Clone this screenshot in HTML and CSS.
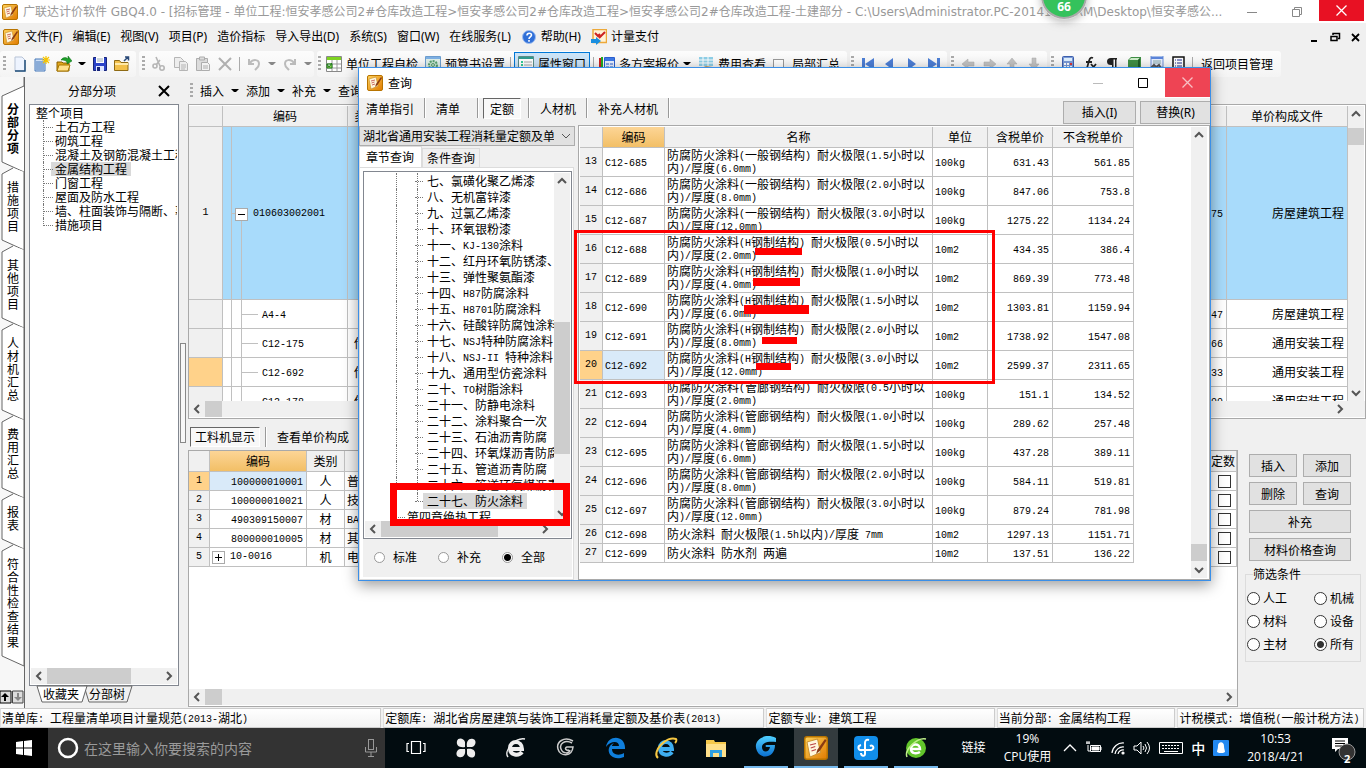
FILE: index.html
```html
<!DOCTYPE html>
<html lang="zh-CN">
<head>
<meta charset="utf-8">
<title>广联达计价软件 GBQ4.0</title>
<link rel="stylesheet" href="styles.css">
</head>
<body>
<svg class="defs" aria-hidden="true">
  <defs>
    <linearGradient id="gold" x1="0" y1="0" x2="1" y2="1"><stop offset="0" stop-color="#ffd35c"/><stop offset="1" stop-color="#e07a00"/></linearGradient>
    <linearGradient id="sky" x1="0" y1="0" x2="0" y2="1"><stop offset="0" stop-color="#4fd0ff"/><stop offset="1" stop-color="#0a6fd0"/></linearGradient>
  </defs>
  <symbol id="app" viewBox="0 0 16 16"><rect x=".5" y=".5" width="15" height="15" rx="1.5" fill="url(#gold)" stroke="#b87400"/><path d="M2 4l7-2 2 9-7 3z" fill="#fff7dc" stroke="#c58a2a" stroke-width=".6"/><path d="M4 6l4-1M4.500 8l3-1M5 10l3-1" stroke="#b44" stroke-width=".8"/><path d="M14 2L9 9l-1 3 2.500-2L15 3z" fill="#8a3b12"/></symbol>
  <symbol id="left" viewBox="0 0 16 16"><path d="M10 4L6 8l4 4" fill="none" stroke="#555" stroke-width="2"/></symbol>
  <symbol id="right" viewBox="0 0 16 16"><path d="M6 4l4 4-4 4" fill="none" stroke="#555" stroke-width="2"/></symbol>
  <symbol id="up" viewBox="0 0 16 16"><path d="M4 10l4-4 4 4" fill="none" stroke="#555" stroke-width="2"/></symbol>
  <symbol id="down" viewBox="0 0 16 16"><path d="M4 6l4 4 4-4" fill="none" stroke="#555" stroke-width="2"/></symbol>
  <symbol id="new" viewBox="0 0 16 16"><path d="M3 1h7l3 3v11H3z" fill="#eef4ff" stroke="#b7c3d6"/><path d="M13 4v11H3" fill="none" stroke="#1f4e79" stroke-width="1.500"/></symbol>
  <symbol id="newproj" viewBox="0 0 16 16"><path d="M1 3h8l2 2v10H1z" fill="#cfe0f7" stroke="#4778b8"/><path d="M3 5v9M5 5v9M7 5v9M9 5v9" stroke="#4778b8"/><path d="M12 0v8M8 4h8M9 1l6 6M15 1L9 7" stroke="#f5c400" stroke-width="1.200"/></symbol>
  <symbol id="open" viewBox="0 0 16 16"><path d="M1 6h5l1 1h6v8H1z" fill="#e2a71d" stroke="#8a6100"/><path d="M3 9h11l-2 6H1z" fill="#ffe08a" stroke="#a97900"/><path d="M5 4c2-3 5-3 7-1V0l4 5-5 3V6C9 4 7 4 5 4z" fill="#1fa02b" stroke="#0a6a14" stroke-width=".5"/></symbol>
  <symbol id="save" viewBox="0 0 16 16"><path d="M1.500 1.500h13v13h-13z" fill="#2b43c8" stroke="#17257a"/><path d="M4 1h8v6H4z" fill="#fff"/><path d="M5 3h6M5 5h6" stroke="#9ab"/><path d="M4 10h8v5H4z" fill="#dfe6ff"/><path d="M5 11h3v4H5z" fill="#17257a"/></symbol>
  <symbol id="folder" viewBox="0 0 16 16"><path d="M.5 4.500h5l1.500 2h7v8H.5z" fill="#f2c04a" stroke="#8e6a14"/><path d="M1 8h13" stroke="#ffe9a8" stroke-width="2"/><path d="M10 5l4-4M11 1h3.500v3.500" stroke="#2a4a78" fill="none" stroke-width="1.500"/></symbol>
  <symbol id="cut" viewBox="0 0 16 16"><g fill="none" stroke="#b5b5b5" stroke-width="1.600"><path d="M5 1l4 9M9 4L5 9"/><circle cx="4" cy="10" r="2"/><circle cx="11" cy="12" r="2.200"/></g></symbol>
  <symbol id="copy" viewBox="0 0 16 16"><g fill="#ededed" stroke="#b5b5b5"><path d="M1.500 1.500h6l3 3v7h-9z"/><path d="M6.500 5.500h6l2 2v7h-8z"/><path d="M8 9h5M8 11h5M8 13h4"/></g></symbol>
  <symbol id="paste" viewBox="0 0 16 16"><g fill="#dcdcdc" stroke="#adadad"><path d="M1.500 2.500h11v12h-11z"/><path d="M4.500 1h5v3h-5z"/><path d="M6.500 6.500h6l2 2v6h-8z" fill="#f3f3f3"/><path d="M8 10h5M8 12h5"/></g></symbol>
  <symbol id="del" viewBox="0 0 16 16"><path d="M2 2l12 12M14 2L2 14" stroke="#b0b0b0" stroke-width="2"/></symbol>
  <symbol id="undo" viewBox="0 0 16 16"><path d="M3 3v5h5M4 7c3-4 9-4 9 1 0 3-2 4-4 6" fill="none" stroke="#bbb" stroke-width="2"/></symbol>
  <symbol id="redo" viewBox="0 0 16 16"><path d="M13 3v5H8M12 7C9 3 3 3 3 8c0 3 2 4 4 6" fill="none" stroke="#bbb" stroke-width="2"/></symbol>
  <symbol id="check" viewBox="0 0 16 16"><path d="M.5.5h15v15H.5z" fill="#fff" stroke="#888"/><path d="M1 1h14v3H1z" fill="#7ed321"/><path d="M1 8h14M1 12h14M6 4v11M11 4v11" stroke="#999"/><path d="M1 8h5v4H1zM1 8l2 3 3-4" fill="#8fd14f" stroke="#1d7a1d"/></symbol>
  <symbol id="gear" viewBox="0 0 16 16"><path d="M.5.5h15v15H.5z" fill="#dff0ea" stroke="#6d9fd0"/><path d="M1 1h14v2H1z" fill="#7fb2e6"/><circle cx="8" cy="9" r="4" fill="#c9e6d2" stroke="#58a070" stroke-width="2" stroke-dasharray="2 1"/><circle cx="8" cy="9" r="1.500" fill="none" stroke="#58a070"/></symbol>
  <symbol id="props" viewBox="0 0 16 16"><path d="M.5.5h15v15H.5z" fill="#fff" stroke="#5b8f8a"/><path d="M1 1h14v2H1z" fill="#2f9c90"/><path d="M3 6h2M3 9h2M3 12h2" stroke="#3c9" stroke-width="2"/><path d="M6 6h8M6 9h8M6 12h8" stroke="#aaa"/></symbol>
  <symbol id="multi" viewBox="0 0 16 16"><path d="M1 2v13" stroke="#c22" stroke-width="2"/><path d="M3 1v14" stroke="#2a2" stroke-width="2"/><path d="M5.500 1.500h10v13h-10z" fill="#e8f0ff" stroke="#2a5fd0"/><path d="M6 2h9v3H6z" fill="#3d7ae8"/><path d="M7 8h3M11 8h3M7 11h3M11 11h3" stroke="#2a5fd0"/></symbol>
  <symbol id="fee" viewBox="0 0 16 16"><path d="M1 1h14v9H1z" fill="#8fd0e8"/><path d="M1 4h14M1 7h14M5 1v9M10 1v9" stroke="#fff"/><path d="M3 12l5-2 7 1v4H3z" fill="#c99c55"/></symbol>
  <symbol id="first" viewBox="0 0 16 16"><path d="M2 2h3v12H2zM14 2v12L5 8z" fill="#4d7fd6"/></symbol>
  <symbol id="prev" viewBox="0 0 16 16"><path d="M11 2v12L3 8z" fill="#4d7fd6"/></symbol>
  <symbol id="next" viewBox="0 0 16 16"><path d="M4 2v12l8-6z" fill="#4d7fd6"/></symbol>
  <symbol id="last" viewBox="0 0 16 16"><path d="M11 2h3v12h-3zM2 2v12l9-6z" fill="#4d7fd6"/></symbol>
  <symbol id="garrow" viewBox="0 0 16 16"><path d="M2 8l6-5v3h6v4H8v3z" fill="#c3c3c3" stroke="#aaa" stroke-width=".5"/></symbol>
  <symbol id="calc" viewBox="0 0 16 16"><rect x="2.500" y=".5" width="11" height="15" rx="1" fill="#7b9bd8" stroke="#3d5fae"/><path d="M4 2h8v3H4z" fill="#dff0ff"/><path d="M4 7h2v2H4zM7 7h2v2H7zM4 10h2v2H4zM7 10h2v2H7zM10 10h2v2h-2zM4 13h2v1H4zM7 13h2v1H7zM10 13h2v1h-2z" fill="#fff"/><path d="M10 7h2v2h-2z" fill="#d33"/></symbol>
  <symbol id="fx" viewBox="0 0 16 16"><path d="M11 2C7 0 7 6 5 12c-1 2-2 2-3 1M4 6h6M9 8l5 6M14 8l-5 6" fill="none" stroke="#222" stroke-width="1.800"/></symbol>
  <symbol id="para" viewBox="0 0 16 16"><path d="M13 2H7a4 3.500 0 0 0 0 7h1v6h1.500V3.500H11V15h1.500V3.500H13z" fill="#222"/></symbol>
  <symbol id="book" viewBox="0 0 16 16"><path d="M2 4l3-3h10v11l-3 3H2z" fill="#3f8f45"/><path d="M5 2h9l-2 2H3z" fill="#cfeecb"/><path d="M12 4l2-2v9l-2 2z" fill="#1f5f27"/></symbol>
  <symbol id="find" viewBox="0 0 16 16"><path d="M3 0h12v11H3z" fill="#e7efff" stroke="#6b8fd6"/><path d="M3 1h12v2H3z" fill="#5c86dc"/><path d="M5 5h8M5 7h8" stroke="#8aa"/><path d="M1 14l5-5 2 2 3-2 3 5" fill="none" stroke="#555" stroke-width="2"/></symbol>
  <symbol id="list" viewBox="0 0 16 16"><path d="M3 1h11v14H3z" fill="#fff" stroke="#111" stroke-width="1.500"/><path d="M5 4h1M5 7h1M5 10h1M7 4h5M7 7h5M7 10h5M5 13h7" stroke="#1c2a8c"/></symbol>
</svg>

<div class="desktop">
  <header class="titlebar">
    <svg class="ic"><use href="#app"/></svg>
    <h1>广联达计价软件 GBQ4.0 - [招标管理 - 单位工程:恒安孝感公司2#仓库改造工程&gt;恒安孝感公司2#仓库改造工程&gt;恒安孝感公司2#仓库改造工程-土建部分 - C:\Users\Administrator.PC-20141120RM\Desktop\恒安孝感公...</h1>
    <div class="winbtns">
      <button aria-label="最小化"><svg width="10" height="10"><path d="M0 5.500h10" stroke="#888"/></svg></button>
      <button aria-label="还原"><svg width="10" height="10"><path d="M.5 2.500h7v7h-7zM2.500 2V.5h7v7H8" fill="none" stroke="#888"/></svg></button>
      <button class="close" aria-label="关闭"><svg width="11" height="11"><path d="M.5.5l10 10M10.500.5l-10 10" stroke="#fff" stroke-width="1.300"/></svg></button>
    </div>
    <div class="ball">66</div>
  </header>

  <nav class="menubar">
    <svg class="ic"><use href="#app"/></svg>
    <button>文件(F)</button><button>编辑(E)</button><button>视图(V)</button><button>项目(P)</button><button>造价指标</button><button>导入导出(D)</button><button>系统(S)</button><button>窗口(W)</button><button>在线服务(L)</button>
    <button><svg class="ic" viewBox="0 0 16 16"><circle cx="8" cy="8" r="6.500" fill="#2f6fd8" stroke="#9dbdf0"/><path d="M6 6.500c0-3 4.500-3 4.500-.5C10.500 8 8 7.800 8 10M8 11v1.800" fill="none" stroke="#fff" stroke-width="1.600"/></svg>帮助(H)</button>
    <button><svg class="ic" viewBox="0 0 16 16"><path d="M2 .5h13.500v13H2z" fill="#fff3d8" stroke="#eda93a" stroke-width="1.500"/><path d="M14 3L8 9M4 4l3 3 2-2" stroke="#c22" stroke-width="2" fill="none"/><path d="M0 10h5V8l5 4-5 4v-2H0z" fill="#1a8fe0"/></svg>计量支付</button>
    <div class="mdi">
      <button aria-label="最小化窗口"><svg width="11" height="11"><path d="M1 9h6" stroke="#000" stroke-width="2"/></svg></button>
      <button aria-label="还原窗口"><svg width="11" height="11"><path d="M1 4.500h6v4H1zM3 3V1.500h6.500v5H8" fill="none" stroke="#000" stroke-width="1.500"/></svg></button>
      <button aria-label="关闭窗口"><svg width="11" height="11"><path d="M2 2l7 7M9 2L2 9" stroke="#000" stroke-width="1.800"/></svg></button>
    </div>
  </nav>

  <div class="toolbars">
    <div class="bar"><i class="grip"></i><svg class="ic"><use href="#new"/></svg><svg class="ic"><use href="#newproj"/></svg><svg class="ic"><use href="#open"/></svg><i class="caret"></i><svg class="ic"><use href="#save"/></svg><svg class="ic"><use href="#folder"/></svg></div>
    <div class="bar edit"><i class="grip"></i><svg class="ic"><use href="#cut"/></svg><svg class="ic"><use href="#copy"/></svg><svg class="ic"><use href="#paste"/></svg><svg class="ic"><use href="#del"/></svg><i class="sep"></i><svg class="ic"><use href="#undo"/></svg><i class="caret dim"></i><svg class="ic"><use href="#redo"/></svg><i class="caret dim"></i></div>
    <div class="bar named"><i class="grip"></i><button><svg class="ic"><use href="#check"/></svg>单位工程自检</button><button><svg class="ic"><use href="#gear"/></svg>预算书设置</button><i class="sep"></i><button class="on"><svg class="ic"><use href="#props"/></svg>属性窗口</button><i class="sep"></i><button><svg class="ic"><use href="#multi"/></svg>多方案报价<i class="caret"></i></button><button><svg class="ic"><use href="#fee"/></svg>费用查看</button><label><input type="checkbox" class="box small">局部汇总</label></div>
    <div class="bar slim"><i class="grip"></i><svg class="ic"><use href="#first"/></svg><svg class="ic"><use href="#prev"/></svg><svg class="ic"><use href="#next"/></svg><svg class="ic"><use href="#last"/></svg></div>
    <div class="bar slim"><i class="grip"></i><svg class="ic"><use href="#garrow"/></svg><svg class="ic r180"><use href="#garrow"/></svg><svg class="ic r90"><use href="#garrow"/></svg><svg class="ic r270"><use href="#garrow"/></svg></div>
    <div class="bar wide"><i class="grip"></i><svg class="ic"><use href="#calc"/></svg><svg class="ic"><use href="#fx"/></svg><svg class="ic"><use href="#para"/></svg><svg class="ic"><use href="#book"/></svg><svg class="ic"><use href="#find"/></svg><svg class="ic"><use href="#list"/></svg><i class="sep"></i><button>返回项目管理</button></div>
  </div>

  <main class="work">
    <nav class="vtabs">
      <svg class="vshape" width="24" height="628" fill="#fff" stroke="#666">
        <path stroke="none" fill="#f0f0f0" d="M24 9L2 19v66l22 10z"/>
        <path d="M24 0v9L2 19v66l22 10"/>
        <path d="M24 95V173L2 163V97l11-6"/>
        <path d="M24 173v78L2 241v-66l11-6"/>
        <path d="M24 251v92L2 333v-80l11-6"/>
        <path d="M24 343v78L2 411v-66l11-6"/>
        <path d="M24 421v51L2 462v-39l11-6"/>
        <path d="M24 472v117L2 579V474l11-6"/>
      </svg>
      <button class="cur">分部分项</button><button>措施项目</button><button>其他项目</button><button>人材机汇总</button><button>费用汇总</button><button>报表</button><button>符合性检查结果</button>
      <svg class="vend" width="24" height="14"><path d="M0 1h11v12H0z" fill="#ddd" stroke="#000"/><path d="M12.500 1H23v12H12.500z" fill="#ddd" stroke="#444"/><path d="M5 3l4 4H6v4H4V7H1z" fill="#000"/><path d="M18 11l4-4h-3V3h-2v4h-3z" fill="#888"/></svg>
    </nav>

    <aside class="side">
      <div class="side-head"><h2>分部分项</h2><button aria-label="关闭面板"><svg width="12" height="12"><path d="M1 1l10 10M11 1L1 11" stroke="#000" stroke-width="2"/></svg></button></div>
      <div class="side-box">
        <ul class="tree">
          <li class="root">整个项目</li><li>土石方工程</li><li>砌筑工程</li><li>混凝土及钢筋混凝土工程</li><li><span class="sel">金属结构工程</span></li><li>门窗工程</li><li>屋面及防水工程</li><li>墙、柱面装饰与隔断、幕墙</li><li>措施项目</li>
        </ul>
        <div class="hs"><svg class="ic"><use href="#left"/></svg><i class="thumb long"></i><svg class="ic end"><use href="#right"/></svg></div>
      </div>
      <div class="side-tabs">
        <svg width="150" height="20" stroke="#666"><path d="M55 1l5 16h38l5-16z" fill="#f0f0f0"/><path d="M8 1l5 16h40l5-16z" fill="#fff"/></svg>
        <button>收藏夹</button><button>分部树</button>
      </div>
    </aside>

    <div class="split"><i></i></div>

    <section class="right">
      <div class="subbar"><i class="grip"></i><button>插入<i class="caret"></i></button><button>添加<i class="caret"></i></button><button>补充<i class="caret"></i></button><button>查询<i class="caret"></i></button></div>
      <div class="grid top">
        <div class="clip">
          <table class="bill">
            <colgroup><col class="c34"><col class="c125"><col class="c38"><col><col class="c60"><col class="c121"></colgroup>
            <tr><th></th><th>编码</th><th>类别</th><th></th><th></th><th>单价构成文件</th></tr>
            <tr class="big"><td class="no">1</td><td class="par"><button aria-label="折叠"><svg width="11" height="11"><path d="M2 5.500h7" stroke="#000"/></svg></button><span class="h">010603002001</span></td><td></td><td></td><td class="num"><span class="h">75</span></td><td class="num">房屋建筑工程</td></tr>
            <tr><td class="no"></td><td class="kid"><span class="h">A4-4</span></td><td></td><td></td><td class="num"><span class="h">47</span></td><td class="num">房屋建筑工程</td></tr>
            <tr><td class="no"></td><td class="kid"><span class="h">C12-175</span></td><td class="cat">借</td><td></td><td class="num"><span class="h">66</span></td><td class="num">通用安装工程</td></tr>
            <tr><td class="no hot"></td><td class="kid"><span class="h">C12-692</span></td><td class="cat">借</td><td></td><td class="num"><span class="h">33</span></td><td class="num">通用安装工程</td></tr>
            <tr><td class="no"></td><td class="kid"><span class="h">C12-178</span></td><td class="cat">借</td><td></td><td class="num"><span class="h">99</span></td><td class="num">通用安装工程</td></tr>
          </table>
        </div>
        <div class="vs"><svg class="ic"><use href="#up"/></svg><i class="thumb"></i><svg class="ic end"><use href="#down"/></svg></div>
        <div class="hs"><svg class="ic"><use href="#left"/></svg><i class="thumb"></i><svg class="ic end"><use href="#right"/></svg></div>
      </div>
      <div class="midbar"><button class="sunk">工料机显示</button><i class="groove"></i><button>查看单价构成</button></div>
      <div class="lower">
        <div class="grid low">
          <div class="clip">
            <table class="res">
              <colgroup><col class="c21"><col class="c97"><col class="c38"><col><col class="c60"></colgroup>
              <tr><th></th><th class="gold">编码</th><th>类别</th><th></th><th class="lock">锁定数</th></tr>
              <tr><td class="no hot">1</td><td class="num pick"><span class="h">100000010001</span></td><td class="mid">人</td><td>普工</td><td class="num"><input type="checkbox" class="box" aria-label="锁定1"></td></tr>
              <tr><td class="no">2</td><td class="num"><span class="h">100000010021</span></td><td class="mid">人</td><td>技工</td><td class="num"><input type="checkbox" class="box" aria-label="锁定2"></td></tr>
              <tr><td class="no">3</td><td class="num"><span class="h">490309150007</span></td><td class="mid">材</td><td><span class="h">BA</span></td><td class="num"><input type="checkbox" class="box" aria-label="锁定3"></td></tr>
              <tr><td class="no">4</td><td class="num"><span class="h">800000010005</span></td><td class="mid">材</td><td>其他</td><td class="num"><input type="checkbox" class="box" aria-label="锁定4"></td></tr>
              <tr><td class="no">5</td><td class="plus"><div><button aria-label="展开"><svg width="11" height="11"><path d="M2 5.500h7M5.500 2v7" stroke="#000"/></svg></button><span class="h">10-0016</span></div></td><td class="mid">机</td><td>电</td><td class="num"><input type="checkbox" class="box" aria-label="锁定5"></td></tr>
            </table>
          </div>
          <div class="hs"><svg class="ic"><use href="#left"/></svg><i class="thumb"></i><svg class="ic end"><use href="#right"/></svg></div>
        </div>
        <aside class="actions">
          <div class="btns"><button>插入</button><button>添加</button><button>删除</button><button>查询</button><button class="full">补充</button><button class="full">材料价格查询</button></div>
          <fieldset><legend>筛选条件</legend>
            <label><input type="radio" name="f">人工</label><label><input type="radio" name="f">机械</label>
            <label><input type="radio" name="f">材料</label><label><input type="radio" name="f">设备</label>
            <label><input type="radio" name="f">主材</label><label><input type="radio" name="f" checked>所有</label>
          </fieldset>
        </aside>
      </div>
    </section>
  </main>

  <footer class="status">
    <div>清单库<span class="h">: </span>工程量清单项目计量规范<span class="h">(2013-</span>湖北<span class="h">)</span></div>
    <div>定额库<span class="h">: </span>湖北省房屋建筑与装饰工程消耗量定额及基价表<span class="h">(2013)</span></div>
    <div>定额专业<span class="h">: </span>建筑工程</div>
    <div>当前分部<span class="h">: </span>金属结构工程</div>
    <div>计税模式<span class="h">: </span>增值税<span class="h">(</span>一般计税方法<span class="h">)</span></div>
  </footer>

  <footer class="taskbar">
    <button class="start" aria-label="开始"><svg width="16" height="16" fill="#fff"><path d="M0 2l7-1v6.500H0zM8 1l8-1v7.500H8zM0 8.500h7V15l-7-1zM8 8.500h8V16l-8-1z"/></svg></button>
    <label class="search"><svg width="22" height="22"><circle cx="11" cy="11" r="9" fill="none" stroke="#fff" stroke-width="2.500"/></svg><input type="text" placeholder="在这里输入你要搜索的内容" aria-label="搜索"><svg width="12" height="18" fill="none" stroke="#999"><rect x="3.500" y=".5" width="5" height="10"/><path d="M.5 8v5h11V8M6 13v4M3 17.500h6"/></svg></label>
    <div class="apps">
      <button aria-label="任务视图"><svg width="20" height="20" fill="none" stroke="#fff" stroke-width="1.200"><path d="M5.500 3.500h9v12h-9zM3 5.500H1v8h2M17 5.500h2v8h-2"/></svg></button>
      <button aria-label="风车"><svg width="22" height="22" viewBox="0 0 22 22" fill="#eee"><path d="M10 10C4 11 1 8 2 4s7-3 8 1zM12 10c-1-6 2-9 6-8s3 7-1 8zM12 12c6-1 9 2 8 6s-7 3-8-1zM10 12c1 6-2 9-6 8s-3-7 1-8z"/></svg></button>
      <button aria-label="浏览器"><svg width="24" height="24" viewBox="0 0 24 24" fill="none" stroke="#eee"><path d="M6 13h12c0-9-12-9-12-1 0 8 9 8 12 4" stroke-width="4"/><path d="M4 21C-1 15 12 1 21 3" stroke-width="1.500"/></svg></button>
      <button aria-label="旋风"><svg width="22" height="22" fill="none" stroke="#ccc" stroke-width="1.500"><path d="M18 4C9-1 1 5 3 12c2 8 14 8 15-2h-6c-3 1-1 4 2 3M17 6C10 2 4 7 6 12c2 5 8 5 9 1"/></svg></button>
      <button aria-label="Edge"><svg width="22" height="22" viewBox="0 0 22 22"><path d="M1 10C3-3 21-2 20 12H7c0 6 7 7 12 4v4C9 24 2 18 4 11c1-3 3-4 5-5-1 1-2 2-2 3h7C14 3 5 4 1 10z" fill="#0f7fdc"/></svg></button>
      <button aria-label="IE"><svg width="24" height="24" viewBox="0 0 24 24" fill="none"><path d="M6 13h12c0-9-12-9-12-1 0 8 9 8 12 4" stroke="#3eaef0" stroke-width="4"/><path d="M4 22C-3 16 13-1 22 3c1 1 0 3-1 4" stroke="#f7c843" stroke-width="2"/></svg></button>
      <button aria-label="资源管理器"><svg width="22" height="20"><path d="M1 2h8l1 2h11v15H1z" fill="#f5c84b"/><path d="M1 6h20v13H1z" fill="#ffe08a"/><path d="M5 19v-7h12v7h-3v-4H8v4z" fill="#2f9fe0"/></svg></button>
      <button class="run" aria-label="广联达"><svg width="24" height="26" viewBox="0 0 24 26"><path d="M22 3C10-3-2 6 3 16c4 9 18 7 18-6h-8c-2 0-2 2 0 2h3c-1 6-8 6-8 0 0-4 5-6 14-5z" fill="url(#sky)"/></svg></button>
      <button class="run now" aria-label="GBQ"><svg width="24" height="24"><use href="#app"/></svg></button>
      <button class="run" aria-label="云"><svg width="24" height="24" fill="none" stroke="#fff" stroke-width="2"><rect width="24" height="24" rx="4" fill="#118eea" stroke="none"/><path d="M15 4c-3-1-4 1-4 3v11c0 3-4 2-4-1M8 14c-4 1-5-4-1-5M6 14h10c5 0 4-6 0-4"/></svg></button>
      <button class="run" aria-label="安全浏览器"><svg width="24" height="24" viewBox="0 0 24 24" fill="none"><circle cx="12" cy="12" r="10" fill="#62c52b"/><path d="M7 13h9c0-6-9-6-9 0 0 5 6 5 9 3" stroke="#fff" stroke-width="2.500"/><path d="M3 21C0 14 13 1 22 3" stroke="#bff08a" stroke-width="1.500"/></svg></button>
    </div>
    <div class="tray">
      <span>链接</span><span class="two cpu">19%<br>CPU使用</span>
      <div class="trayicons">
      <svg width="14" height="14" fill="none" stroke="#fff" stroke-width="1.300"><path d="M1 10l6-6 6 6"/></svg>
      <svg width="18" height="14" fill="none" stroke="#fff"><path d="M5.500 4.500h10v6h-10zM1 2h4M2 0v3M4 0v3M3 4v6h2M16 6v3"/><path d="M7 6h7v3H7z" fill="#fff"/></svg>
      <svg width="14" height="14" fill="none" stroke="#fff" stroke-width="1.200"><path d="M1 12A11 11 0 0 1 13 2M4 13a8 8 0 0 1 9-7M7 13a5 5 0 0 1 6-4"/><circle cx="12" cy="12" r="1" fill="#fff"/></svg>
      <svg width="18" height="14" fill="none" stroke="#fff"><path d="M1 5h3l4-4v12L4 9H1zM10 5q2 2 0 4M12 3q3 4 0 8M14 1q5 6 0 12"/></svg>
      <svg width="24" height="14" fill="none" stroke="#fff"><path d="M.5 1.500h23v11H.5z"/><path d="M3 4.500h18M3 7.500h18" stroke-dasharray="2 1"/><path d="M5 10.500h14"/></svg>
      <b>中</b>
      <svg width="16" height="16"><rect width="16" height="16" rx="1" fill="#2288f0"/><path d="M4 12c0-2 1-3 1-6 0-5 6-5 6 0 0 3 1 4 1 6l-2 1H6z" fill="#fff"/></svg>
      </div>
      <span class="two">10:53<br>2018/4/21</span>
      <button class="note" aria-label="通知"><svg width="26" height="26"><path d="M1 3h16v11H7l-3 3v-3H1z" fill="#fff"/><path d="M4 6h10M4 8.500h10M4 11h7" stroke="#000"/><circle cx="16" cy="17" r="8" fill="#333" stroke="#999"/></svg><em>2</em></button>
    </div>
  </footer>

  <div class="dialog" role="dialog" aria-label="查询">
    <div class="dtitle"><svg class="ic"><use href="#app"/></svg><h2>查询</h2>
      <div class="dbtns"><button aria-label="最小化"><svg width="10" height="10"><path d="M0 5.500h10" stroke="#bbb"/></svg></button><button aria-label="最大化"><svg width="10" height="10"><path d="M.5.500h9v9h-9z" fill="none" stroke="#000"/></svg></button><button class="close" aria-label="关闭对话框"><svg width="11" height="11"><path d="M.5.5l10 10M10.500.5l-10 10" stroke="#f7c0c5" stroke-width="1.300"/></svg></button></div>
    </div>
    <div class="dbar">
      <div class="dtabs"><button>清单指引</button><i class="groove"></i><button class="roomy">清单</button><i class="groove"></i><button class="sunk">定额</button><i class="groove"></i><button>人材机</button><i class="groove"></i><button>补充人材机</button><i class="groove"></i></div>
      <div class="dact"><button>插入(I)</button><button>替换(R)</button></div>
    </div>
    <div class="dmain">
      <div class="dleft">
        <div class="combo"><select aria-label="定额库"><option>湖北省通用安装工程消耗量定额及单</option></select><svg class="ic"><path d="M4 6l4 4 4-4" fill="none" stroke="#555"/></svg></div>
        <div class="qtabs"><button class="cur">章节查询</button><button>条件查询</button></div>
        <div class="qpane">
          <div class="qbox">
            <ul class="qtree">
              <li>七、氯磺化聚乙烯漆</li><li>八、无机富锌漆</li><li>九、过氯乙烯漆</li><li>十、环氧银粉漆</li><li>十一、<span class="h">KJ-130</span>涂料</li><li>十二、红丹环氧防锈漆、</li><li>十三、弹性聚氨酯漆</li><li>十四、<span class="h">H87</span>防腐涂料</li><li>十五、<span class="h">H8701</span>防腐涂料</li><li>十六、硅酸锌防腐蚀涂料</li><li>十七、<span class="h">NSJ</span>特种防腐涂料</li><li>十八、<span class="h">NSJ-II </span>特种涂料</li><li>十九、通用型仿瓷涂料</li><li>二十、<span class="h">TO</span>树脂涂料</li><li>二十一、防静电涂料</li><li>二十二、涂料聚合一次</li><li>二十三、石油沥青防腐</li><li>二十四、环氧煤沥青防腐</li><li>二十五、管道沥青防腐</li><li>二十六、管道环氧煤沥青</li><li class="fin"><span class="sel">二十七、防火涂料</span></li><li class="up">第四章绝热工程</li>
            </ul>
            <div class="vs"><svg class="ic"><use href="#up"/></svg><i class="thumb"></i><svg class="ic end"><use href="#down"/></svg></div>
            <div class="hs"><svg class="ic"><use href="#left"/></svg><i class="thumb"></i><svg class="ic end"><use href="#right"/></svg></div>
          </div>
          <div class="scope"><label><input type="radio" name="s">标准</label><label><input type="radio" name="s">补充</label><label><input type="radio" name="s" checked>全部</label></div>
        </div>
      </div>
      <div class="dgrid">
        <table class="quota">
          <colgroup><col class="c23"><col class="c62"><col class="c268"><col class="c55"><col class="c65"><col class="c81"></colgroup>
          <tr><th></th><th class="gold">编码</th><th>名称</th><th>单位</th><th>含税单价</th><th>不含税单价</th></tr>
          <tr><td class="no">13</td><td><span class="h">C12-685</span></td><td class="nm">防腐防火涂料<span class="h">(</span>一般钢结构<span class="h">) </span>耐火极限<span class="h">(1.5</span>小时以<br>内<span class="h">)/</span>厚度<span class="h">(6.0mm)</span></td><td><span class="h">100kg</span></td><td class="num"><span class="h">631.43</span></td><td class="num"><span class="h">561.85</span></td></tr>
          <tr><td class="no">14</td><td><span class="h">C12-686</span></td><td class="nm">防腐防火涂料<span class="h">(</span>一般钢结构<span class="h">) </span>耐火极限<span class="h">(2.0</span>小时以<br>内<span class="h">)/</span>厚度<span class="h">(8.0mm)</span></td><td><span class="h">100kg</span></td><td class="num"><span class="h">847.06</span></td><td class="num"><span class="h">753.8</span></td></tr>
          <tr><td class="no">15</td><td><span class="h">C12-687</span></td><td class="nm">防腐防火涂料<span class="h">(</span>一般钢结构<span class="h">) </span>耐火极限<span class="h">(3.0</span>小时以<br>内<span class="h">)/</span>厚度<span class="h">(12.0mm)</span></td><td><span class="h">100kg</span></td><td class="num"><span class="h">1275.22</span></td><td class="num"><span class="h">1134.24</span></td></tr>
          <tr><td class="no">16</td><td><span class="h">C12-688</span></td><td class="nm">防腐防火涂料<span class="h">(H</span>钢制结构<span class="h">) </span>耐火极限<span class="h">(0.5</span>小时以<br>内<span class="h">)/</span>厚度<span class="h">(2.0mm)</span></td><td><span class="h">10m2</span></td><td class="num"><span class="h">434.35</span></td><td class="num"><span class="h">386.4</span></td></tr>
          <tr><td class="no">17</td><td><span class="h">C12-689</span></td><td class="nm">防腐防火涂料<span class="h">(H</span>钢制结构<span class="h">) </span>耐火极限<span class="h">(1.0</span>小时以<br>内<span class="h">)/</span>厚度<span class="h">(4.0mm)</span></td><td><span class="h">10m2</span></td><td class="num"><span class="h">869.39</span></td><td class="num"><span class="h">773.48</span></td></tr>
          <tr><td class="no">18</td><td><span class="h">C12-690</span></td><td class="nm">防腐防火涂料<span class="h">(H</span>钢制结构<span class="h">) </span>耐火极限<span class="h">(1.5</span>小时以<br>内<span class="h">)/</span>厚度<span class="h">(6.0mm)</span></td><td><span class="h">10m2</span></td><td class="num"><span class="h">1303.81</span></td><td class="num"><span class="h">1159.94</span></td></tr>
          <tr><td class="no">19</td><td><span class="h">C12-691</span></td><td class="nm">防腐防火涂料<span class="h">(H</span>钢制结构<span class="h">) </span>耐火极限<span class="h">(2.0</span>小时以<br>内<span class="h">)/</span>厚度<span class="h">(8.0mm)</span></td><td><span class="h">10m2</span></td><td class="num"><span class="h">1738.92</span></td><td class="num"><span class="h">1547.08</span></td></tr>
          <tr><td class="no hot">20</td><td class="pick"><span class="h">C12-692</span></td><td class="nm">防腐防火涂料<span class="h">(H</span>钢制结构<span class="h">) </span>耐火极限<span class="h">(3.0</span>小时以<br>内<span class="h">)/</span>厚度<span class="h">(12.0mm)</span></td><td><span class="h">10m2</span></td><td class="num"><span class="h">2599.37</span></td><td class="num"><span class="h">2311.65</span></td></tr>
          <tr><td class="no">21</td><td><span class="h">C12-693</span></td><td class="nm">防腐防火涂料<span class="h">(</span>管廊钢结构<span class="h">) </span>耐火极限<span class="h">(0.5</span>小时以<br>内<span class="h">)/</span>厚度<span class="h">(2.0mm)</span></td><td><span class="h">100kg</span></td><td class="num"><span class="h">151.1</span></td><td class="num"><span class="h">134.52</span></td></tr>
          <tr><td class="no">22</td><td><span class="h">C12-694</span></td><td class="nm">防腐防火涂料<span class="h">(</span>管廊钢结构<span class="h">) </span>耐火极限<span class="h">(1.0</span>小时以<br>内<span class="h">)/</span>厚度<span class="h">(4.0mm)</span></td><td><span class="h">100kg</span></td><td class="num"><span class="h">289.62</span></td><td class="num"><span class="h">257.48</span></td></tr>
          <tr><td class="no">23</td><td><span class="h">C12-695</span></td><td class="nm">防腐防火涂料<span class="h">(</span>管廊钢结构<span class="h">) </span>耐火极限<span class="h">(1.5</span>小时以<br>内<span class="h">)/</span>厚度<span class="h">(6.0mm)</span></td><td><span class="h">100kg</span></td><td class="num"><span class="h">437.28</span></td><td class="num"><span class="h">389.11</span></td></tr>
          <tr><td class="no">24</td><td><span class="h">C12-696</span></td><td class="nm">防腐防火涂料<span class="h">(</span>管廊钢结构<span class="h">) </span>耐火极限<span class="h">(2.0</span>小时以<br>内<span class="h">)/</span>厚度<span class="h">(8.0mm)</span></td><td><span class="h">100kg</span></td><td class="num"><span class="h">584.11</span></td><td class="num"><span class="h">519.81</span></td></tr>
          <tr><td class="no">25</td><td><span class="h">C12-697</span></td><td class="nm">防腐防火涂料<span class="h">(</span>管廊钢结构<span class="h">) </span>耐火极限<span class="h">(3.0</span>小时以<br>内<span class="h">)/</span>厚度<span class="h">(12.0mm)</span></td><td><span class="h">100kg</span></td><td class="num"><span class="h">879.24</span></td><td class="num"><span class="h">781.98</span></td></tr>
          <tr class="one"><td class="no">26</td><td><span class="h">C12-698</span></td><td class="nm">防火涂料<span class="h"> </span>耐火极限<span class="h">(1.5h</span>以内<span class="h">)/</span>厚度<span class="h"> 7mm</span></td><td><span class="h">10m2</span></td><td class="num"><span class="h">1297.13</span></td><td class="num"><span class="h">1151.71</span></td></tr>
          <tr class="one"><td class="no">27</td><td><span class="h">C12-699</span></td><td class="nm">防火涂料<span class="h"> </span>防水剂<span class="h"> </span>两遍</td><td><span class="h">10m2</span></td><td class="num"><span class="h">137.51</span></td><td class="num"><span class="h">136.22</span></td></tr>
        </table>
        <div class="vs"><svg class="ic"><use href="#up"/></svg><i class="thumb"></i><svg class="ic end"><use href="#down"/></svg></div>
      </div>
    </div>
    <svg class="marks" width="852" height="514" fill="none" stroke="red">
      <rect x="217.500" y="164.500" width="418" height="151" stroke-width="3"/>
      <rect x="35.500" y="419.500" width="173" height="36" stroke-width="7"/>
      <path stroke="none" fill="red" d="M397 181h47v7h-47zM395 211h47v8h-47zM386 238h65v9h-65zM404 270h35v7h-35zM398 296h35v7h-35z"/>
    </svg>
  </div>
</div>
</body>
</html>
```
FILE: styles.css
```css
* { box-sizing: border-box; }
body { margin: 0; font: 12px/14px "Noto Sans CJK SC", sans-serif; color: #000; background: #f0f0f0; }
.desktop { position: relative; height: 100vh; display: flex; flex-direction: column; overflow: hidden; }
.defs { position: absolute; width: 0; height: 0; }
button { font: inherit; color: inherit; border: 0; background: none; padding: 0; white-space: nowrap; }
h1, h2 { margin: 0; font: inherit; }
svg { display: block; flex: none; }
.ic { width: 16px; height: 16px; }
.r180 { transform: rotate(180deg); }
.r90 { transform: rotate(90deg); }
.r270 { transform: rotate(-90deg); }
.h { font-family: "Liberation Mono", monospace; font-size: 10px; line-height: 10px; vertical-align: 1px; white-space: pre; }
ul { margin: 0; padding: 0; list-style: none; }

.titlebar { position: relative; flex: none; height: 23px; background: #fff; display: flex; align-items: center; padding-left: 2px; gap: 5px; color: #999; }
.titlebar h1 { flex: 1; font-family: "DejaVu Sans", "Noto Sans CJK SC", sans-serif; white-space: nowrap; overflow: hidden; }
.winbtns, .dbtns { display: flex; align-self: stretch; }
.winbtns button, .dbtns button { width: 45px; display: flex; align-items: center; justify-content: center; }
.winbtns .close { background: #e81123; margin-right: 2px; margin-bottom: 2px; }
.ball { position: absolute; left: 1041px; bottom: 4px; width: 46px; height: 46px; border-radius: 50%; background: #34c25c; border: 2px solid #aaa; outline: 1px solid #ddd; box-shadow: 0 3px 8px #8889; color: #fff; font: bold 12px/14px "Open Sans", sans-serif; text-align: center; padding-top: 25px; }

.menubar { flex: none; height: 28px; display: flex; align-items: center; padding-left: 3px; gap: 10px; font-family: "DejaVu Sans", "Noto Sans CJK SC", sans-serif; }
.menubar > .ic { margin-right: -4px; }
.menubar > button { display: flex; align-items: center; gap: 4px; font-family: "Noto Sans", "Noto Sans CJK SC", sans-serif; }
.mdi { margin-left: auto; display: flex; gap: 9px; padding-right: 5px; }

.toolbars { flex: none; height: 26px; display: flex; gap: 3px; }
.bar { display: flex; align-items: center; gap: 6px; padding: 0 6px 0 3px; background: linear-gradient(#fcfcfc, #f4f4f4); border-radius: 3px; }
.bar.edit { padding-right: 2px; }
.bar button, .bar label { display: flex; align-items: center; gap: 4px; padding: 0 2px; }
.bar.named { gap: 3px; padding-left: 1px; padding-right: 5px; }
.bar.named .on { border: 1px solid #0078d7; background: #cce4f7; padding: 0 3px; height: 24px; align-self: flex-start; margin-top: 1px; }
.bar.slim { padding-left: 1px; padding-right: 5px; }
.bar.wide { padding-left: 1px; padding-right: 6px; gap: 6px; }
.grip { width: 3px; height: 16px; background: repeating-linear-gradient(#aaa 0 2px, transparent 2px 4px); }
.sep { width: 1px; height: 14px; background: #aaa; }
.caret { width: 8px; height: 4px; border: 3px solid transparent; border-top: 3px solid #000; border-bottom: 0; }
.caret.dim { border-top-color: #888; }
.box { appearance: none; margin: 0; width: 13px; height: 13px; border: 1px solid #333; background: #fff; }
.box.small { width: 11px; height: 11px; border-color: #999; margin-right: 4px; }

.work { flex: 1; min-height: 0; display: flex; }
.vtabs { position: relative; width: 25px; flex: none; display: flex; flex-direction: column; border-right: 1px solid #666; background: #f7f7f7; }
.vshape { position: absolute; left: 0; top: 0; }
.vtabs button { position: relative; width: 24px; padding: 12px 5px 14px 7px; white-space: normal; line-height: 13px; word-break: break-all; text-align: left; }
.vtabs .cur { padding-top: 25px; font-weight: bold; }
.vend { margin-top: auto; margin-bottom: 4px; }

.side { width: 155px; flex: none; display: flex; flex-direction: column; padding: 0 1px 2px 4px; }
.side-head { height: 27px; display: flex; align-items: center; padding: 0 9px 0 39px; justify-content: space-between; }
.side-box { flex: 1; min-height: 0; border: 1px solid #828790; background: #fff; padding: 1px; display: flex; flex-direction: column; }
.tree { flex: 1; padding: 0 0 0 5px; overflow: hidden; white-space: nowrap; }
.tree li { position: relative; padding-left: 19px; height: 14px; }
.tree li.root { padding-left: 0; }
.tree li:not(.root)::before { content: ""; position: absolute; left: 7px; top: 0; width: 9px; height: 7px; border-left: 1px dotted #777; border-bottom: 1px dotted #777; }
.tree li:not(.root):not(:last-child)::after { content: ""; position: absolute; left: 7px; top: 7px; height: 7px; border-left: 1px dotted #777; }
.sel { display: inline-block; background: #d9d9d9; padding: 0 4px; margin-left: -4px; }
.side-tabs { height: 20px; display: flex; position: relative; padding-left: 14px; gap: 10px; }
.side-tabs svg { position: absolute; left: 0; top: -1px; }
.side-tabs button { position: relative; height: 16px; }
.split { width: 8px; flex: none; display: flex; align-items: center; }
.split i { width: 6px; height: 100px; border: 1px solid #888; background: #f7f7f7; }

.hs { height: 16px; flex: none; background: #f0f0f0; display: flex; }
.vs { width: 16px; flex: none; background: #f0f0f0; display: flex; flex-direction: column; }
.thumb { background: #cdcdcd; width: 17px; }
.vs .thumb { width: auto; height: 17px; margin-top: 6px; }
.thumb.long { width: 84px; }
.hs .end { margin-left: auto; }
.vs .end { margin-top: auto; }

.right { flex: 1; min-width: 0; display: flex; flex-direction: column; }
.subbar { height: 27px; flex: none; display: flex; align-items: center; gap: 7px; padding: 0 2px; }
.subbar button { display: flex; align-items: center; gap: 7px; }
.grid { border: 1px solid #a9a9a9; background: #fff; min-width: 0; overflow: hidden; }
.top { flex: 314 1 0; min-height: 0; display: grid; grid-template: minmax(0, 1fr) 16px / minmax(0, 1fr) 17px; padding: 1px 0; }
.top .hs { grid-column: 1 / 3; padding-right: 17px; }
.clip { overflow: hidden; min-height: 0; flex: 1; }
table { border-collapse: separate; border-spacing: 0; table-layout: fixed; }
.bill, .res { width: 100%; }
.c21 { width: 21px; } .c23 { width: 23px; } .c34 { width: 34px; } .c38 { width: 38px; } .c55 { width: 55px; } .c60 { width: 60px; } .c62 { width: 62px; } .c65 { width: 65px; } .c81 { width: 81px; } .c97 { width: 97px; } .c121 { width: 121px; } .c125 { width: 125px; } .c268 { width: 268px; }
th, td { border: 0 solid #c0c0c0; border-width: 0 1px 1px 0; padding: 0 2px; font-weight: normal; white-space: nowrap; overflow: hidden; height: 29px; text-align: left; }
th { background: #f0f0f0; height: 21px; text-align: center; }
th.gold { background: linear-gradient(#fcd596, #f2bf66); }
td.no { background: #f0f0f0; text-align: center; padding: 0; font-family: "Liberation Mono", monospace; font-size: 10px; }
td.hot { background: #ffd28a; }
td.pick { background: #d9eaf9; }
td.num { text-align: right; padding-right: 3px; }
td.mid { text-align: center; }
.big td { height: 173px; background-color: #a8dbfb; }
.big td.no { background: #f0f0f0; }
.kid { padding-left: 39px; background: linear-gradient(#c0c0c0, #c0c0c0) 8px 0 / 1px 100% no-repeat, linear-gradient(#c0c0c0, #c0c0c0) 18px 0 / 1px 100% no-repeat, linear-gradient(#c0c0c0, #c0c0c0) 18px 50% / 17px 1px no-repeat; }
.par { padding-left: 12px; background: linear-gradient(#c0c0c0, #c0c0c0) 8px 0 / 1px 100% no-repeat, linear-gradient(#c0c0c0, #c0c0c0) 18px 100% / 1px 50% no-repeat, linear-gradient(#c0c0c0, #c0c0c0) 8px 50% / 5px 1px no-repeat; }
.par button, .plus button { border: 1px solid #aaa; background: #fff; display: inline-block; vertical-align: middle; margin-right: 5px; }
.plus div { display: flex; align-items: center; height: 17px; }
.cat { padding-left: 6px; }
.midbar { flex: none; height: 31px; padding: 7px 0 2px 2px; display: flex; align-items: center; gap: 5px; }
.midbar button { padding: 0 5px; height: 20px; }
.midbar .sunk { padding: 0 4px; }
.sunk { border: 1px solid #fff; border-top-color: #666; border-left-color: #666; background: #f8f8f8; }
.groove { width: 2px; height: 20px; border-left: 1px solid #999; border-right: 1px solid #fff; }
.lower { flex: 259 1 0; min-height: 0; display: flex; padding-bottom: 1px; }
.low { flex: 1; display: flex; flex-direction: column; padding: 0 0 1px; }
.res td { height: 19px; }
.res th, .bill th { height: 21px; }
.res td .box { display: block; margin-left: auto; margin-right: 2px; }
.res .lock { text-align: right; padding-right: 1px; }
.actions { width: 128px; flex: none; padding: 4px 5px 0 7px; }
.btns { display: grid; grid-template-columns: 48px 48px; gap: 5px 6px; padding-left: 4px; }
.btns button, .dact button { background: #e1e1e1; border: 1px solid #adadad; height: 23px; }
.btns .full { grid-column: 1 / 3; }
fieldset { margin: 6px 0 0; padding: 10px 0 10px 1px; border: 1px solid #dcdcdc; display: grid; grid-template-columns: 67px 1fr; gap: 9px 0; }
legend { padding: 0; margin-left: 6px; }
label { display: flex; align-items: center; gap: 3px; white-space: nowrap; }
input[type="radio"] { appearance: none; margin: 0; width: 13px; height: 13px; border: 1px solid #333; border-radius: 50%; background: #fff; }
input[type="radio"]:checked { background: radial-gradient(#333 0 3px, #fff 4px); }

.status { flex: none; height: 20px; display: grid; grid-template-columns: 384fr 384fr 230fr 180fr 188fr; gap: 2px; padding-right: 2px; }
.status div { border: 1px solid #ccc; border-left-color: #ddd; background: linear-gradient(#fff, #f2f2f2); padding: 2px 0 0 1px; white-space: nowrap; overflow: hidden; }

.taskbar { flex: none; height: 40px; background: #020c10; color: #fff; display: flex; }
.taskbar button { display: flex; align-items: center; justify-content: center; }
.start { width: 48px; background: #000; }
.search { width: 337px; background: #333; padding: 0 8px 0 9px; gap: 5px; }
.search input { flex: 1; min-width: 0; border: 0; background: none; color: #fff; font: 14px "Noto Sans CJK SC", sans-serif; padding: 0; outline: 0; }
.search input::placeholder { color: #9a9a9a; opacity: 1; }
.apps { display: flex; gap: 6px; padding-left: 9px; }
.apps button { width: 44px; border-bottom: 2px solid transparent; padding-top: 2px; }
.apps .run { border-color: #76b9ed; }
.apps .now { background: #333b3e; }
.tray { margin-left: auto; display: flex; align-items: center; gap: 18px; }
.two { text-align: center; line-height: 18px; }
.tray > span { font-family: "Open Sans", "Noto Sans CJK SC", sans-serif; }
.tray > .cpu { margin-right: -6px; }
.trayicons { display: flex; align-items: center; gap: 8px; }
.trayicons b { font-size: 14px; font-weight: 500; }
.note { position: relative; width: 44px; }
.note em { position: absolute; left: 22px; top: 17px; font: bold 11px/14px "Open Sans", sans-serif; }

.dialog { position: absolute; left: 358px; top: 67px; width: 853px; height: 514px; border: 1px solid #3a8fe8; background: #f0f0f0; box-shadow: 0 4px 14px #0006; display: flex; flex-direction: column; }
.dtitle { height: 30px; flex: none; background: #fff; display: flex; align-items: center; padding-left: 8px; gap: 5px; }
.dbtns { margin-left: auto; }
.dbtns .close { background: #ee4454; margin-bottom: 1px; }
.dbar { height: 27px; flex: none; display: flex; justify-content: space-between; }
.dtabs { display: flex; padding-left: 3px; gap: 2px; }
.dtabs button { height: 22px; padding: 0 8px; }
.dtabs button:first-child { padding-left: 4px; }
.dtabs .roomy { padding-right: 15px; }
.dtabs .sunk { padding: 0 6px; margin: 0 5px 0 2px; height: 21px; }
.dact { display: flex; gap: 4px; padding-top: 3px; }
.dact button { width: 73px; font-family: "Noto Sans", "Noto Sans CJK SC", sans-serif; }
.dact button:last-child { width: 70px; border-right: 0; }
.dmain { flex: 1; min-height: 0; display: flex; gap: 3px; }
.dleft { width: 216px; display: flex; flex-direction: column; padding-top: 1px; }
.combo { position: relative; flex: none; }
.combo select { appearance: none; width: 100%; height: 20px; border: 1px solid #adadad; background: #e1e1e1; font: inherit; padding: 0 20px 0 3px; }
.combo .ic { position: absolute; right: 1px; top: 2px; }
.qtabs { flex: none; display: flex; align-items: flex-end; height: 21px; }
.qtabs button { height: 19px; padding: 0 4px; border: 1px solid #dcdcdc; border-bottom: 0; }
.qtabs .cur { height: 21px; padding: 0 7px 0 6px; background: #fff; }
.qpane { flex: 1; min-height: 0; margin-right: 1px; background: #fff; border: 1px solid #dcdcdc; padding: 3px 1px 2px 3px; display: flex; flex-direction: column; }
.qbox { flex: 1; min-height: 0; border: 1px solid #828790; padding: 1px; display: grid; grid-template: minmax(0, 1fr) 16px / minmax(0, 1fr) 16px; }
.qtree { overflow: hidden; white-space: nowrap; }
.qtree li { position: relative; height: 16px; line-height: 16px; padding-left: 62px; }
.qtree li::before { content: ""; position: absolute; left: 31px; top: 0; height: 16px; width: 20px; border-left: 1px dotted #777; border-right: 1px dotted #777; }
.qtree li::after { content: ""; position: absolute; left: 50px; top: 8px; width: 8px; border-top: 1px dotted #777; }
.qtree .fin::before { height: 8px; }
.qtree .up { padding-left: 42px; }
.qtree .up::before { width: 8px; height: 8px; border-right: 0; border-bottom: 1px dotted #777; }
.qtree .up::after { display: none; }
.qbox .vs .thumb { margin-top: 133px; height: 132px; }
.qbox .hs { grid-column: 1 / 3; padding-right: 17px; }
.qbox .hs .thumb { width: 117px; }
.scope { height: 38px; flex: none; background: #f0f0f0; display: flex; align-items: center; padding-left: 11px; padding-bottom: 2px; gap: 21px; }
.scope label { gap: 8px; }
.scope input[type="radio"] { width: 11px; height: 11px; border-color: #999; }
.scope input[type="radio"]:checked { background: radial-gradient(#000 0 3px, #fff 4px); }
.dgrid { flex: 1; min-width: 0; border: 1px solid #a9a9a9; background: #fff; display: flex; justify-content: space-between; padding: 1px 2px 1px 1px; }
.quota { width: 554px; flex: none; align-self: flex-start; }
.quota th { height: 21px; }
.quota td { height: 29px; padding-left: 2px; }
.quota td.no { padding: 0; }
.quota .nm { line-height: 12px; }
.quota .one td { height: 19px; }
.dgrid .vs .thumb { margin-top: 401px; height: 17px; }
.marks { position: absolute; left: -1px; top: -1px; }
```
